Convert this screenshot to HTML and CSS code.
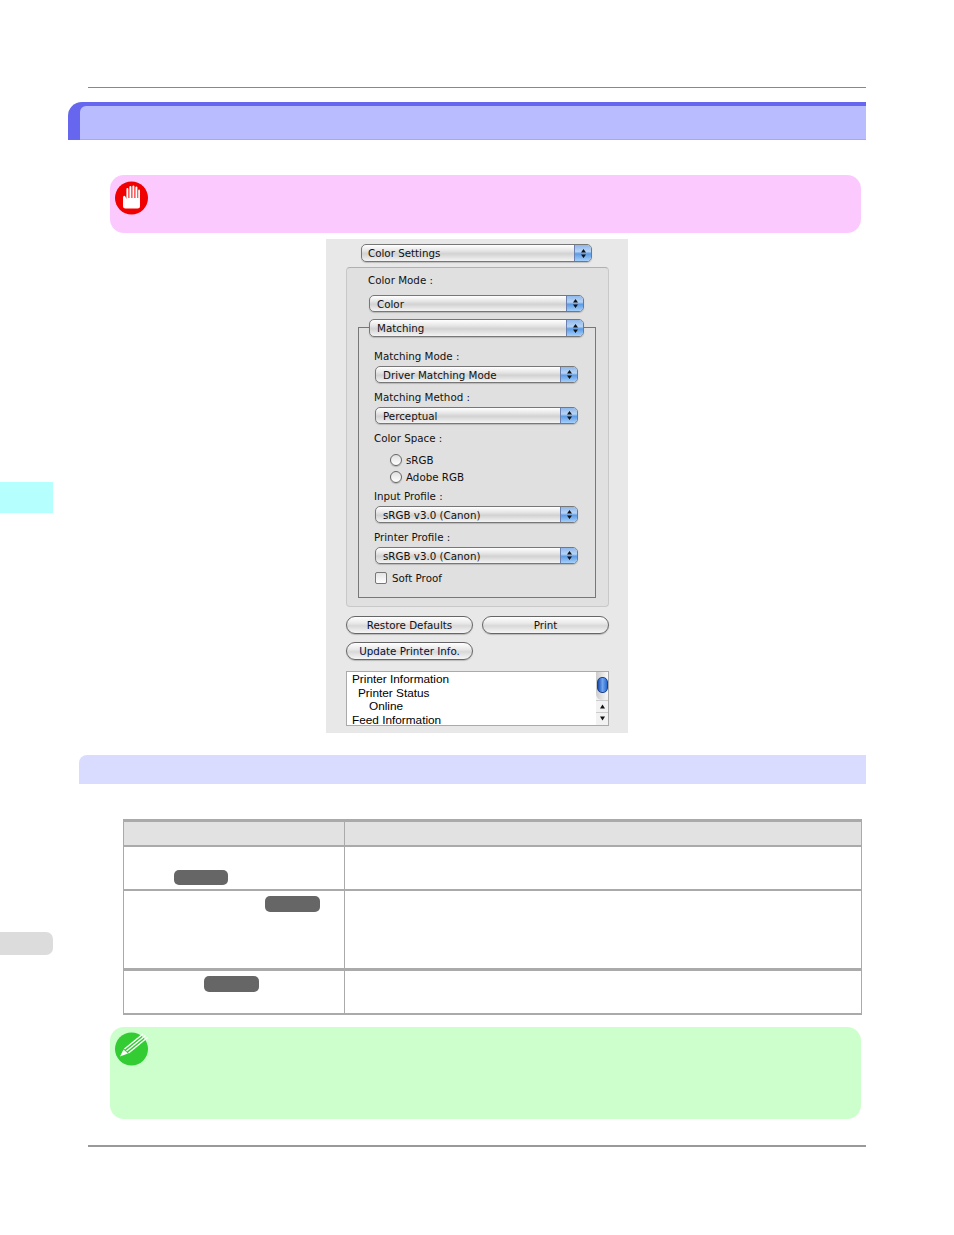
FILE: index.html
```html
<!DOCTYPE html>
<html lang="en">
<head>
    <meta charset="UTF-8">
    <meta name="viewport" content="width=device-width, initial-scale=1.0">
    <title>Color Settings</title>
    <link rel="stylesheet" href="styles.css">
</head>
<body>
    <svg class="defs" width="0" height="0" aria-hidden="true">
        <symbol id="arrows" viewBox="0 0 7 11">
            <path d="M3.5 1 L6 4.5 H1 Z M1 6.5 H6 L3.5 10 Z" fill="#111"/>
        </symbol>
    </svg>

    <div class="page">
        <!-- Side tabs -->
        <div class="side-tabs">
            <div class="tab-current"></div>
            <div class="tab-other"></div>
        </div>

        <div class="main">
            <div class="rule"></div>

            <div class="chapter-head"><div class="chapter-inner"></div></div>

            <!-- Important note -->
            <div class="note note-important">
                <svg class="note-icon" viewBox="0 0 34 34">
                    <circle cx="16.5" cy="17" r="16.5" fill="#f00000"/>
                    <path d="M8 17 V25 Q8 27.5 10.5 27.5 H22.5 Q25 27.5 25 25 V9.5 Q25 8.5 24 8.5 Q23.2 8.5 23.2 9.5 V17 H22.4 V6.5 Q22.4 5.5 21.4 5.5 Q20.4 5.5 20.4 6.5 V17 H19.4 V5.5 Q19.4 4.5 18.4 4.5 Q17.4 4.5 17.4 5.5 V17 H16.4 V6 Q16.4 5 15.4 5 Q14.4 5 14.4 6 V17 H13.4 V8 Q13.4 7 12.4 7 Q11.4 7 11.4 8 V18 L10.4 15.5 Q9.6 14.5 8.6 15 Q8 15.5 8 17 Z" fill="#fff"/>
                </svg>
            </div>

            <!-- Dialog screenshot -->
            <div class="panel">
                <div class="popup popup-top">
                    <span class="popup-text">Color Settings</span>
                    <span class="stepper"><svg width="7" height="11"><use href="#arrows"/></svg></span>
                </div>

                <div class="group">
                    <div class="label label-mode">Color Mode :</div>
                    <div class="popup popup-wide popup-color">
                        <span class="popup-text">Color</span>
                        <span class="stepper"><svg width="7" height="11"><use href="#arrows"/></svg></span>
                    </div>

                    <div class="matching-box">
                        <div class="popup popup-wide popup-legend">
                            <span class="popup-text">Matching</span>
                            <span class="stepper"><svg width="7" height="11"><use href="#arrows"/></svg></span>
                        </div>

                        <div class="matching-body">
                            <div class="label">Matching Mode :</div>
                            <div class="popup popup-small">
                                <span class="popup-text">Driver Matching Mode</span>
                                <span class="stepper"><svg width="7" height="11"><use href="#arrows"/></svg></span>
                            </div>

                            <div class="label">Matching Method :</div>
                            <div class="popup popup-small">
                                <span class="popup-text">Perceptual</span>
                                <span class="stepper"><svg width="7" height="11"><use href="#arrows"/></svg></span>
                            </div>

                            <div class="label">Color Space :</div>
                            <div class="radio-row radio-first"><span class="radio"></span>sRGB</div>
                            <div class="radio-row"><span class="radio"></span>Adobe RGB</div>

                            <div class="label label-after-radio">Input Profile :</div>
                            <div class="popup popup-small">
                                <span class="popup-text">sRGB v3.0 (Canon)</span>
                                <span class="stepper"><svg width="7" height="11"><use href="#arrows"/></svg></span>
                            </div>

                            <div class="label">Printer Profile :</div>
                            <div class="popup popup-small">
                                <span class="popup-text">sRGB v3.0 (Canon)</span>
                                <span class="stepper"><svg width="7" height="11"><use href="#arrows"/></svg></span>
                            </div>

                            <div class="check-row"><span class="check"></span>Soft Proof</div>
                        </div>
                    </div>
                </div>

                <div class="button-row button-row-first">
                    <div class="mac-button">Restore Defaults</div>
                    <div class="mac-button">Print</div>
                </div>
                <div class="button-row button-row-second">
                    <div class="mac-button mac-button-dark">Update Printer Info.</div>
                </div>

                <div class="info-list">
                    <div class="info-text">
                        <div>Printer Information</div>
                        <div class="indent-1">Printer Status</div>
                        <div class="indent-2">Online</div>
                        <div>Feed Information</div>
                    </div>
                    <div class="scrollbar">
                        <div class="scroll-track"><div class="scroll-thumb"></div></div>
                        <div class="scroll-btn"><svg width="5" height="5" viewBox="0 0 6 6"><path d="M3 0.5 L6 5.5 H0 Z" fill="#111"/></svg></div>
                        <div class="scroll-btn"><svg width="5" height="5" viewBox="0 0 6 6"><path d="M0 0.5 H6 L3 5.5 Z" fill="#111"/></svg></div>
                    </div>
                </div>
            </div>

            <div class="section-head"></div>

            <!-- Settings table -->
            <div class="table">
                <div class="row row-head">
                    <div class="cell cell-left"></div>
                    <div class="cell"></div>
                </div>
                <div class="row row-1">
                    <div class="cell cell-left"><span class="pill pill-1"></span></div>
                    <div class="cell"></div>
                </div>
                <div class="row row-2">
                    <div class="cell cell-left"><span class="pill pill-2"></span></div>
                    <div class="cell"></div>
                </div>
                <div class="row row-3">
                    <div class="cell cell-left"><span class="pill pill-3"></span></div>
                    <div class="cell"></div>
                </div>
            </div>

            <!-- Note -->
            <div class="note note-tip">
                <svg class="note-icon" viewBox="0 0 34 34">
                    <circle cx="16.5" cy="17" r="16.5" fill="#33cc33"/>
                    <path d="M5 24.5 L8.5 17.5 L13 21.5 Z" fill="#fff"/>
                    <path d="M9.5 17 L28 2 M11.5 19 L30.5 3.5 M13.5 21 L33 5" stroke="#fff" stroke-width="1.5" fill="none"/>
                </svg>
            </div>

            <div class="rule rule-bottom"></div>
        </div>
    </div>
</body>
</html>
```

FILE: styles.css
```css
* {
    margin: 0;
    padding: 0;
    box-sizing: border-box;
}

body {
    background-color: #fff;
    font-family: "DejaVu Sans", sans-serif;
}

.defs {
    display: block;
    height: 0;
}

.page {
    display: flex;
    height: 1235px;
    overflow: hidden;
}

/* Side tabs */
.side-tabs {
    width: 53px;
    padding-top: 482px;
    flex-shrink: 0;
}

.tab-current {
    height: 31px;
    background-color: #b5ffff;
}

.tab-other {
    height: 23px;
    margin-top: 419px;
    background-color: #dcdcdc;
    border-radius: 0 7px 7px 0;
}

.main {
    width: 798px;
    margin-left: 15px;
    padding-top: 87px;
}

.rule {
    height: 1px;
    margin-left: 20px;
    background-color: #888;
}

.rule-bottom {
    margin-top: 26px;
    height: 2px;
    background-color: #999;
}

/* Headings */
.chapter-head {
    height: 38px;
    margin-top: 14px;
    padding: 4px 0 0 12px;
    background-color: #6666ee;
    border-radius: 14px 0 0 0;
}

.chapter-inner {
    height: 100%;
    background-color: #b9bcff;
    border-bottom: 1px solid #a4a8fa;
    border-radius: 6px 0 0 0;
}

.section-head {
    height: 29px;
    margin: 22px 0 0 11px;
    background-color: #d9dbff;
    border-radius: 8px 0 0 0;
}

/* Notes */
.note {
    width: 751px;
    margin-left: 42px;
    border-radius: 14px;
}

.note-important {
    height: 58px;
    margin-top: 35px;
    padding: 6px 0 0 5px;
    background-color: #fcc9ff;
}

.note-tip {
    height: 92px;
    margin-top: 12px;
    padding: 5px 0 0 5px;
    background-color: #ccffcc;
}

.note-icon {
    display: block;
    width: 34px;
    height: 34px;
}

/* Dialog screenshot */
.panel {
    width: 302px;
    height: 494px;
    margin: 6px 0 0 258px;
    padding: 5px 19px 7px 20px;
    background-color: #e8e8e8;
    font-size: 10.3px;
    color: #111;
}

.label {
    height: 14px;
    line-height: 14px;
    white-space: nowrap;
}

.popup {
    display: flex;
    justify-content: space-between;
    height: 18px;
    border: 1px solid #777;
    border-radius: 5px;
    background: linear-gradient(#fff, #e6e6e6 35%, #d2d2d2 55%, #f4f4f4);
    box-shadow: 0 1px 1px rgba(0, 0, 0, 0.18);
    overflow: hidden;
}

.popup-text {
    padding-left: 6px;
    line-height: 16px;
    white-space: nowrap;
}

.stepper {
    display: flex;
    align-items: center;
    justify-content: center;
    width: 17px;
    background: linear-gradient(#8fb8ec, #b9d4f3 40%, #5e9be4 55%, #a5d0fb);
    border-left: 1px solid #6a80b0;
}

.popup-top {
    width: 231px;
    margin-left: 15px;
}

.group {
    width: 263px;
    height: 340px;
    margin-top: 5px;
    padding-top: 5px;
    background-color: #e0e0e0;
    border: 1px solid #c8c8c8;
    border-top-color: #b0b0b0;
    border-radius: 4px;
}

.label-mode {
    margin-left: 21px;
}

.popup-wide {
    width: 215px;
}

.popup-wide .popup-text {
    padding-left: 7px;
}

.popup-color {
    height: 17px;
    margin: 8px 0 0 22px;
}

.matching-box {
    width: 238px;
    height: 271px;
    margin: 15px 0 0 11px;
    border: 1px solid #777;
}

.popup-legend {
    margin: -9px 0 0 10px;
}

.matching-body {
    padding: 12px 0 0 15px;
}

.popup-small {
    width: 203px;
    height: 17px;
    margin: 3px 0 7px 1px;
}

.popup-small .popup-text {
    padding-left: 7px;
}

.radio-row,
.check-row {
    display: flex;
    align-items: center;
    height: 14px;
    white-space: nowrap;
}

.radio-row {
    margin: 3px 0 0 16px;
}

.radio-first {
    margin-top: 8px;
}

.radio {
    width: 12px;
    height: 12px;
    margin-right: 4px;
    border: 1px solid #666;
    border-radius: 50%;
    background: linear-gradient(#e0e0e0, #fff);
    box-shadow: 0 1px 1px rgba(0, 0, 0, 0.2);
}

.label-after-radio {
    margin-top: 5px;
}

.check-row {
    margin-left: 1px;
}

.check {
    width: 12px;
    height: 12px;
    margin-right: 5px;
    border: 1px solid #777;
    border-radius: 2px;
    background: linear-gradient(#e4e4e4, #fff);
}

.button-row {
    display: flex;
    gap: 9px;
    height: 18px;
}

.button-row-first {
    margin-top: 9px;
}

.button-row-second {
    margin-top: 8px;
}

.mac-button {
    width: 127px;
    line-height: 16px;
    text-align: center;
    font-size: 10.3px;
    border: 1px solid #666;
    border-radius: 9px;
    background: linear-gradient(#fff, #e8e8e8 40%, #d8d8d8 55%, #f6f6f6);
    box-shadow: 0 1px 1px rgba(0, 0, 0, 0.2);
    white-space: nowrap;
}

.mac-button-dark {
    color: #001040;
}

.info-list {
    display: flex;
    justify-content: space-between;
    width: 263px;
    height: 55px;
    margin-top: 11px;
    background-color: #fff;
    border: 1px solid #aaa;
    overflow: hidden;
}

.info-text {
    padding: 1px 0 0 5px;
    font-family: "Liberation Sans", Arial, sans-serif;
    font-size: 11.8px;
    line-height: 13.7px;
    color: #000;
}

.indent-1 {
    padding-left: 6px;
}

.indent-2 {
    padding-left: 17px;
}

.scrollbar {
    display: flex;
    flex-direction: column;
    width: 12px;
    background-color: #f2f2f2;
}

.scroll-track {
    height: 28px;
    padding: 5px 0 0 1px;
    background: linear-gradient(to right, #ccc, #fafafa);
    border-radius: 0 0 6px 6px;
}

.scroll-thumb {
    width: 11px;
    height: 16px;
    background: linear-gradient(to right, #1a4fb0, #6fa6ef 50%, #2a6ad0);
    border: 1px solid #1c3f90;
    border-radius: 5px;
}

.scroll-btn {
    display: flex;
    align-items: center;
    justify-content: center;
    height: 12px;
    border-top: 1px solid #ccc;
}

/* Settings table */
.table {
    width: 739px;
    margin: 35px 0 0 55px;
    border-left: 1px solid #aaa;
    border-right: 1px solid #aaa;
}

.row {
    display: grid;
    grid-template-columns: 221px 1fr;
}

.row-head {
    height: 28px;
    background-color: #e2e2e2;
    border-top: 3px solid #aaa;
    border-bottom: 2px solid #aaa;
}

.row-1 {
    height: 44px;
    border-bottom: 2px solid #aaa;
}

.row-2 {
    height: 80px;
    border-bottom: 3px solid #aaa;
}

.row-3 {
    height: 44px;
    border-bottom: 2px solid #aaa;
}

.cell-left {
    border-right: 1px solid #aaa;
}

.pill {
    display: block;
    width: 55px;
    height: 16px;
    background-color: #666;
    border-radius: 5px;
}

.pill-1 {
    width: 54px;
    height: 15px;
    margin: 23px 0 0 50px;
}

.pill-2 {
    margin: 5px 0 0 141px;
}

.pill-3 {
    margin: 5px 0 0 80px;
}
```
